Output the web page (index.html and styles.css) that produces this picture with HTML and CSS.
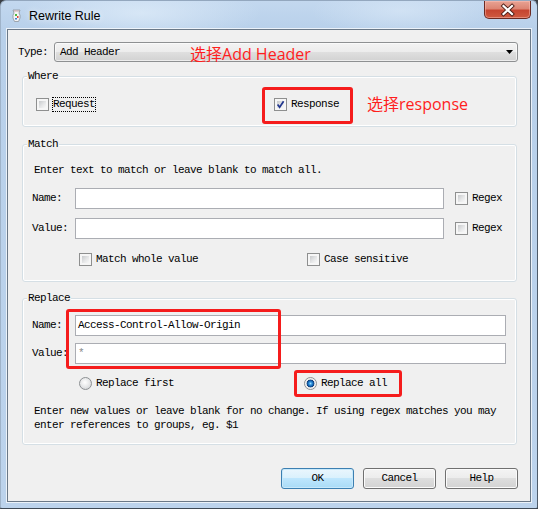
FILE: index.html
```html
<!DOCTYPE html>
<html>
<head>
<meta charset="utf-8">
<title>Rewrite Rule</title>
<link rel="stylesheet" href="styles.css">
</head>
<body>
<div class="window">
  <div class="titlebar">
    <svg class="app-icon" viewBox="0 0 9 14" width="9" height="14">
      <path d="M1 1 H8 L7 4 Q8.5 6 8 9 L6.5 12.5 H2.5 L1 9 Q0.5 6 2 4 Z" fill="#f4f4f4" stroke="#8d949c" stroke-width="0.8"/>
      <rect x="3" y="5" width="2" height="2" fill="#52b846"/>
      <rect x="5" y="7" width="1.5" height="2" fill="#e0463a"/>
      <rect x="3" y="9" width="2" height="1.5" fill="#3d7fd1"/>
      <rect x="2" y="1.5" width="5" height="1" fill="#c9a3a8"/>
    </svg>
    <span class="title">Rewrite Rule</span>
    <div class="close">
      <svg viewBox="0 0 47 18" width="47" height="18">
        <path d="M19.5 5 L28 13 M28 5 L19.5 13" stroke="#4a1d16" stroke-width="4" stroke-linecap="square"/>
        <path d="M19.5 5 L28 13 M28 5 L19.5 13" stroke="#ffffff" stroke-width="2.2" stroke-linecap="square"/>
      </svg>
    </div>
  </div>

  <div class="client ui">
    <div class="type-row">
      <span class="type-lbl">Type:</span>
      <div class="combo">
        <span>Add Header</span>
        <span class="note note-type">选择Add Header</span>
        <svg class="arrow" viewBox="0 0 7 4" width="7" height="4"><polygon points="0,0 7,0 3.5,4" fill="#000"/></svg>
      </div>
    </div>

    <div class="group where">
      <span class="legend">Where</span>
      <div class="where-row">
        <div class="req-item">
          <label class="check"><span class="cb"></span><span class="focus">Request</span></label>
        </div>
        <div class="resp">
          <label class="check"><span class="cb"><svg viewBox="0 0 11 11" width="11" height="11"><path d="M2.6 5.6 L4.6 8.3 L8.6 2.3" fill="none" stroke="#22378f" stroke-width="1.7"/></svg></span><span>Response</span></label>
          <span class="mark mark-resp"></span>
        </div>
        <span class="note note-resp">选择response</span>
      </div>
    </div>

    <div class="group match">
      <span class="legend">Match</span>
      <div class="desc">Enter text to match or leave blank to match all.</div>
      <div class="frow first">
        <span class="flabel">Name:</span>
        <div class="tb tb-match"></div>
        <label class="check regex"><span class="cb"></span><span>Regex</span></label>
      </div>
      <div class="frow second">
        <span class="flabel">Value:</span>
        <div class="tb tb-match"></div>
        <label class="check regex"><span class="cb"></span><span>Regex</span></label>
      </div>
      <div class="opt-row match-opts">
        <label class="check"><span class="cb"></span><span>Match whole value</span></label>
        <label class="check"><span class="cb"></span><span>Case sensitive</span></label>
      </div>
    </div>

    <div class="group replace">
      <span class="legend">Replace</span>
      <div class="frow first">
        <span class="flabel">Name:</span>
        <div class="tb tb-replace">Access-Control-Allow-Origin</div>
      </div>
      <div class="frow rsecond">
        <span class="flabel">Value:</span>
        <div class="tb tb-replace"><span class="star">*</span></div>
      </div>
      <div class="opt-row radio-opts">
        <label class="check"><span class="rb"></span><span>Replace first</span></label>
        <div class="resp">
          <label class="check"><span class="rb on"></span><span>Replace all</span></label>
          <span class="mark mark-all"></span>
        </div>
      </div>
      <div class="help">Enter new values or leave blank for no change. If using regex matches you may<br>enter references to groups, eg. $1</div>
      <span class="mark mark-name"></span>
    </div>

    <div class="buttons">
      <div class="btn default">OK</div>
      <div class="btn">Cancel</div>
      <div class="btn">Help</div>
    </div>
  </div>
</div>
</body>
</html>
```

FILE: styles.css
```css
* { box-sizing: border-box; }
html, body { margin: 0; padding: 0; }
body {
  width: 538px;
  height: 509px;
  overflow: hidden;
  background: #3a3f45;
}

.window {
  width: 538px;
  height: 509px;
  border: 1px solid;
  border-color: #93a7be #4d5a68 #3f4a56 #9fb3c9;
  border-radius: 6px 6px 2px 2px;
  background:
    radial-gradient(ellipse 120px 30px at 140px 12px, rgba(225,238,250,0.7), rgba(225,238,250,0)),
    radial-gradient(ellipse 90px 25px at 400px 10px, rgba(220,234,248,0.6), rgba(220,234,248,0)),
    linear-gradient(180deg, #c3d8ef 0, #b8d0ea 28px, #bcd3ec 100%);
  display: flex;
  flex-direction: column;
  overflow: hidden;
}

.titlebar {
  height: 28px;
  flex: none;
  display: flex;
  align-items: flex-start;
  padding-left: 11px;
}
.app-icon { display: block; margin-top: 8px; flex: none; }
.title {
  margin-left: 8px;
  margin-top: 8px;
  font: 12.5px/14px "Liberation Sans", Arial, sans-serif;
  color: #000;
  text-shadow: 0 0 6px rgba(255,255,255,0.9);
}
.close {
  margin-left: auto;
  margin-right: 6px;
  width: 47px;
  height: 18px;
  border: 1px solid #6b2a22;
  border-top: none;
  border-radius: 0 0 5px 5px;
  background: linear-gradient(180deg, #e8a394 0, #dc8573 45%, #c64530 55%, #cf5a40 100%);
  box-shadow: inset 0 0 0 1px rgba(255,200,190,0.45);
  overflow: hidden;
}
.close svg { display: block; margin-left: -1px; }

.client {
  flex: 1;
  margin: 0 6px 6px 6px;
  border: 1px solid #6a7887;
  box-shadow: 0 0 0 1px rgba(255,255,255,0.7);
  background: #f0f0f0;
}

.ui {
  font-family: "Liberation Mono", "Courier New", monospace;
  font-size: 11px;
  line-height: 15px;
  letter-spacing: -0.6px;
  color: #000;
}

/* Type row */
.type-row {
  display: flex;
  align-items: center;
  height: 20px;
  margin: 12px 12px 0 10px;
}
.type-lbl { width: 36px; flex: none; }
.combo {
  flex: 1;
  height: 20px;
  display: flex;
  align-items: center;
  padding-left: 5px;
  border: 1px solid #8e9092;
  border-radius: 3px;
  background: linear-gradient(180deg, #f3f3f3 0, #ececec 50%, #dfdfdf 50%, #d2d2d2 100%);
  box-shadow: inset 0 0 0 1px rgba(255,255,255,0.6);
}
.arrow { display: block; margin-left: auto; margin-right: 4px; flex: none; }

.note {
  color: #ff1e1e;
  font-family: "Open Sans", "Noto Sans CJK SC", sans-serif;
  font-size: 16px;
  letter-spacing: 0;
  white-space: nowrap;
}
.note-type { margin-left: 70px; margin-top: 3px; line-height: 18px; }
.note-resp { margin-left: 28px; line-height: 18px; margin-top: -2px; }

/* group boxes */
.group {
  position: relative;
  margin: 0 13px 0 14px;
  border: 1px solid #d5dfe5;
  border-radius: 3px;
  box-shadow: inset 0 0 0 1px #ffffff;
}
.legend {
  position: absolute;
  top: -7px;
  left: 4px;
  padding: 0 1px;
  line-height: 13px;
  background: #f0f0f0;
}

.where { margin-top: 14px; padding: 20px 0 14px 13px; }
.where-row { display: flex; align-items: center; height: 15px; }
.req-item { width: 238px; flex: none; }
.resp { position: relative; }

.check { display: flex; align-items: center; gap: 4px; white-space: nowrap; }
.focus { border: 1px dotted #000; line-height: 13px; margin-left: -1px; }

.cb {
  display: block;
  flex: none;
  width: 13px;
  height: 13px;
  border: 1px solid #8e8f8f;
  padding: 2px;
  background: linear-gradient(135deg, #c8cacc 0, #e6e7e8 55%, #f8f8f8 100%) content-box, #f6f6f6;
}
.cb svg { display: block; margin: -2px; }

.rb {
  display: block;
  flex: none;
  width: 13px;
  height: 13px;
  border-radius: 50%;
  border: 1px solid #8d9093;
  background: radial-gradient(circle at 45% 40%, #ffffff 0, #e9eaeb 45%, #c9ccd0 100%);
}
.rb.on {
  background: radial-gradient(circle at 50% 50%, #9fdcff 0, #3b9be0 1.3px, #1266b6 2.6px, #123f78 3.6px, #e6e7e8 4.2px, #f7f7f7 5.5px);
}

.mark {
  position: absolute;
  border: 3px solid #f51c1c;
  border-radius: 3px;
  pointer-events: none;
}
.mark-resp { left: -12px; top: -10px; width: 91px; height: 37px; }
.mark-all { left: -10px; top: -6px; width: 108px; height: 27px; }
.mark-name { left: 43px; top: 10px; width: 215px; height: 60px; }

/* match */
.match { margin-top: 17px; padding: 18px 0 14px 9px; }
.desc { margin-left: 2px; line-height: 14px; }
.frow { display: flex; align-items: center; height: 21px; }
.match .first { margin-top: 11px; }
.match .second { margin-top: 9px; }
.flabel { width: 43px; flex: none; }
.tb {
  height: 21px;
  border: 1px solid #abadb3;
  background: #fff;
  padding-left: 2px;
  display: flex;
  align-items: center;
  flex: none;
}
.tb-match { width: 369px; }
.regex { margin-left: 11px; }
.opt-row { display: flex; align-items: center; height: 15px; padding-left: 47px; }
.match-opts { margin-top: 13px; }
.match-opts > .check:first-child { width: 228px; flex: none; }

/* replace */
.replace { margin-top: 16px; padding: 16px 0 12px 9px; }
.tb-replace { width: 431px; }
.rsecond { margin-top: 7px; }
.star { color: #8a8a8a; }
.radio-opts { margin-top: 12px; }
.radio-opts > .check:first-child { width: 225px; flex: none; }
.help { margin-top: 13px; margin-left: 2px; line-height: 14px; white-space: nowrap; }

/* buttons */
.buttons {
  display: flex;
  justify-content: flex-end;
  gap: 9px;
  margin: 23px 12px 0 0;
}
.btn {
  width: 73px;
  height: 21px;
  border: 1px solid #707070;
  border-radius: 3px;
  background: linear-gradient(180deg, #f4f4f4 0, #ececec 50%, #dedede 50%, #d3d3d3 100%);
  box-shadow: inset 0 0 0 1px #fbfbfb;
  display: flex;
  align-items: center;
  justify-content: center;
  line-height: 15px;
}
.btn.default {
  border-color: #3c7fb1;
  background: linear-gradient(180deg, #eaf6fd 0, #d9f0fc 50%, #bee6fd 50%, #a9dbf6 100%);
  box-shadow: inset 0 0 0 1px #c8e9fb;
}
```
